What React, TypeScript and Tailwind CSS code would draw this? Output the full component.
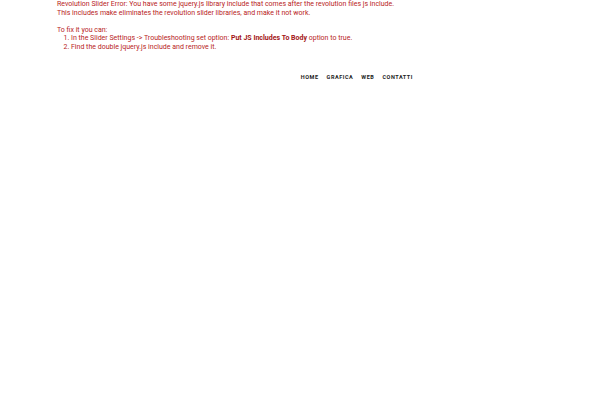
import React from 'react';

const App: React.FC = () => {
  return (
    <div className="min-h-screen w-[600px] bg-white font-[Roboto,sans-serif]">
      {/* error block */}
      <div className="pl-[57px] text-[7px] leading-[8.5px] text-[#b81c1c]">
        <div>Revolution Slider Error: You have some jquery.js library include that comes after the revolution files js include.</div>
        <div>This includes make eliminates the revolution slider libraries, and make it not work.</div>
        <div className="h-[8.5px]"></div>
        <div>To fix it you can:</div>
        <ol className="list-decimal pl-[14px]">
          <li>
            In the Slider Settings -&gt; Troubleshooting set option: <strong className="font-bold text-[#a31515]">Put JS Includes To Body</strong> option to true.
          </li>
          <li>Find the double jquery.js include and remove it.</li>
        </ol>
      </div>

      {/* menu */}
      <nav className="mt-[22px] flex w-[413px] justify-end">
        <ul className="flex gap-[8px] text-[5.5px] font-bold tracking-[0.1em] text-[#222]">
          <li>HOME</li>
          <li>GRAFICA</li>
          <li>WEB</li>
          <li>CONTATTI</li>
        </ul>
      </nav>
    </div>
  );
};

export default App;
